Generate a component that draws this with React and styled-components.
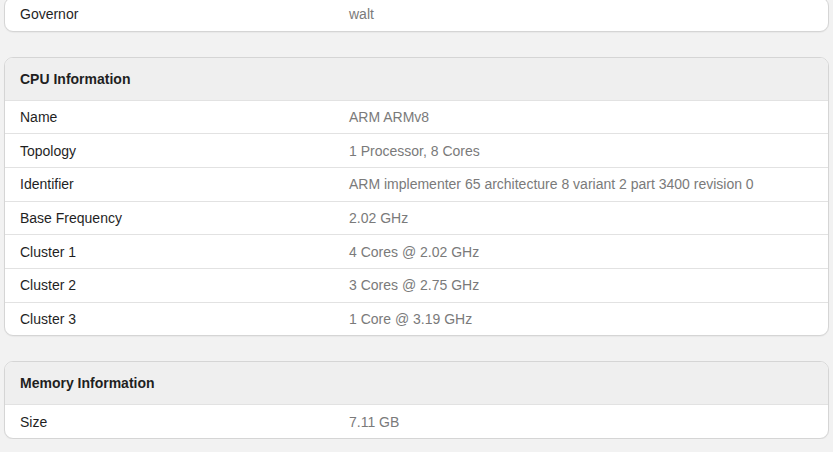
import React from "react";
import styled, { createGlobalStyle } from "styled-components";

const GlobalStyle = createGlobalStyle`
  html, body {
    margin: 0;
    padding: 0;
    background-color: #f2f2f2;
    font-family: "Liberation Sans", Arial, sans-serif;
    overflow: hidden;
  }
`;

const Page = styled.div`
  display: flex;
  flex-direction: column;
  gap: 25px;
  padding: 0 4px;
  margin-top: -3px;
`;

const Card = styled.div`
  background-color: #ffffff;
  border: 1px solid #d5d5d5;
  border-radius: 9px;
  overflow: hidden;
  box-shadow: 0 1px 1px rgba(0, 0, 0, 0.04);
`;

const Header = styled.div`
  height: 42px;
  display: flex;
  align-items: center;
  padding: 0 15px;
  background-color: #efefef;
  color: #1f1f1f;
  font-size: 14px;
  font-weight: 700;
`;

const Row = styled.div`
  display: grid;
  grid-template-columns: 329px 1fr;
  align-items: center;
  height: 32.67px;
  border-top: ${(props) => (props.first ? "none" : "1px solid #e2e2e2")};
  font-size: 14px;
`;

const Label = styled.div`
  padding: 0 15px;
  color: #1f1f1f;
`;

const Value = styled.div`
  padding: 0 15px;
  color: #7a7a7a;
`;

const Section = ({ title, rows }) => (
  <Card>
    {title && <Header>{title}</Header>}
    {rows.map(([label, value], i) => (
      <Row key={label} first={!title && i === 0}>
        <Label>{label}</Label>
        <Value>{value}</Value>
      </Row>
    ))}
  </Card>
);

const cpuRows = [
  ["Name", "ARM ARMv8"],
  ["Topology", "1 Processor, 8 Cores"],
  ["Identifier", "ARM implementer 65 architecture 8 variant 2 part 3400 revision 0"],
  ["Base Frequency", "2.02 GHz"],
  ["Cluster 1", "4 Cores @ 2.02 GHz"],
  ["Cluster 2", "3 Cores @ 2.75 GHz"],
  ["Cluster 3", "1 Core @ 3.19 GHz"],
];

export default function App() {
  return (
    <>
      <GlobalStyle />
      <Page>
        <Section rows={[["Governor", "walt"]]} />
        <Section title="CPU Information" rows={cpuRows} />
        <Section title="Memory Information" rows={[["Size", "7.11 GB"]]} />
      </Page>
    </>
  );
}
